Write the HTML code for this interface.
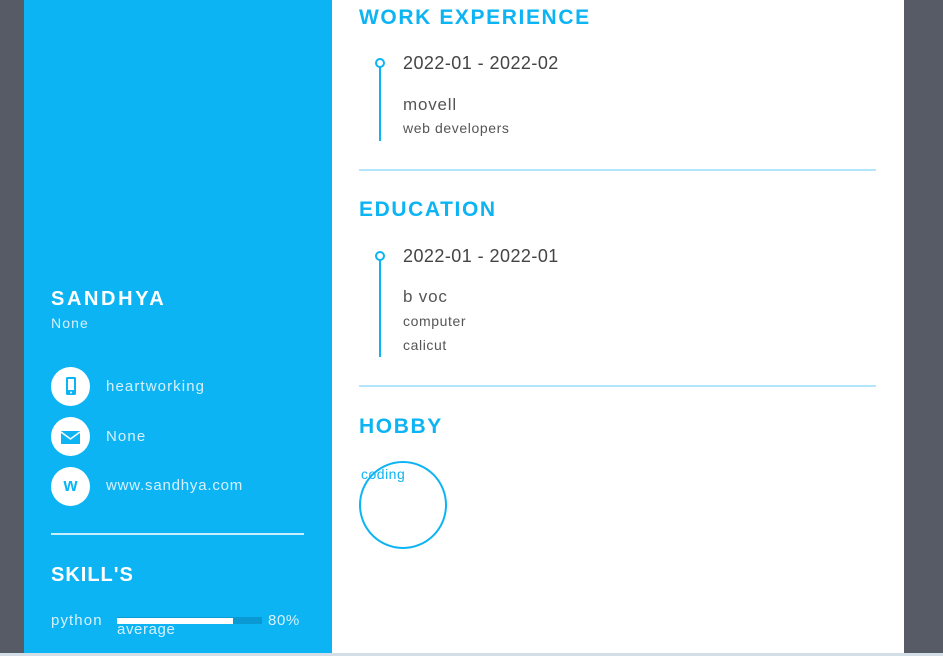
<!DOCTYPE html>
<html><head><style>
*{margin:0;padding:0;box-sizing:border-box}
body{width:943px;height:656px;overflow:hidden;background:#575b66;font-family:"Liberation Sans",sans-serif;position:relative}
.side{position:absolute;left:24px;top:0;width:308px;height:653px;background:#0db4f3;color:#fff}
.main{position:absolute;left:332px;top:0;width:572px;height:653px;background:#fff}
.bot{position:absolute;left:0;top:653px;width:943px;height:3px;background:#d3dee6}
.abs{position:absolute;white-space:nowrap}
.h{color:#0db4f3;font-weight:bold;font-size:21px;letter-spacing:1.6px}
.ic{position:absolute;left:27px;width:39px;height:39px;border-radius:50%;background:#fff}
.lt{color:#d6f1fd;font-size:15px;letter-spacing:1.1px}
.tl{position:absolute;width:2px;background:#0db4f3}
.dot{position:absolute;width:10px;height:10px;border:2px solid #0db4f3;border-radius:50%;background:#fff}
.hr{position:absolute;left:27px;width:517px;height:2px;background:#b3e5fb}
.d{font-size:18px;color:#444;letter-spacing:.45px}
.s{font-size:14px;color:#555;letter-spacing:.6px}
</style></head><body>
<div class="side">
<div class="abs" style="left:27px;top:288px;font-size:20px;font-weight:bold;letter-spacing:2.6px">SANDHYA</div>
<div class="abs lt" style="left:27px;top:315px;font-size:14px">None</div>
<div class="ic" style="top:367px"><svg width="39" height="39"><rect x="15" y="10" width="10" height="18" rx="1.5" fill="#0db4f3"/><rect x="17" y="12" width="6" height="11" fill="#fff"/><circle cx="20" cy="25.5" r="1" fill="#fff"/></svg></div>
<div class="abs lt" style="left:82px;top:378px">heartworking</div>
<div class="ic" style="top:417px"><svg width="39" height="39"><rect x="10" y="14" width="19" height="13" fill="#0db4f3"/><path d="M10 15 L19.5 22 L29 15" stroke="#fff" stroke-width="1.5" fill="none"/></svg></div>
<div class="abs lt" style="left:82px;top:428px">None</div>
<div class="ic" style="top:467px"><div class="abs" style="left:0;width:39px;text-align:center;top:8px;color:#0db4f3;font-weight:bold;font-size:18px">w</div></div>
<div class="abs lt" style="left:82px;top:477px;letter-spacing:.8px">www.sandhya.com</div>
<div class="abs" style="left:27px;top:533px;width:253px;height:2px;background:#c8eefd"></div>
<div class="abs" style="left:27px;top:564px;font-size:20px;font-weight:bold;letter-spacing:1px">SKILL'S</div>
<div class="abs lt" style="left:27px;top:612px">python</div>
<div class="abs" style="left:93px;top:617px;width:145px;height:7px;background:#0a99d2"></div>
<div class="abs" style="left:93px;top:618px;width:116px;height:6px;background:#fff"></div>
<div class="abs lt" style="left:93px;top:621px;letter-spacing:.6px">average</div>
<div class="abs lt" style="left:244px;top:612px;letter-spacing:.6px">80%</div>
</div>
<div class="main">
<div class="abs h" style="left:27px;top:6px">WORK EXPERIENCE</div>
<div class="tl" style="left:47px;top:64px;height:77px"></div>
<div class="dot" style="left:43px;top:58px"></div>
<div class="abs d" style="left:71px;top:53px">2022-01 - 2022-02</div>
<div class="abs" style="left:71px;top:95px;font-size:17px;color:#555;letter-spacing:.8px">movell</div>
<div class="abs s" style="left:71px;top:120px">web developers</div>
<div class="hr" style="top:169px"></div>
<div class="abs h" style="left:27px;top:198px">EDUCATION</div>
<div class="tl" style="left:47px;top:257px;height:100px"></div>
<div class="dot" style="left:43px;top:251px"></div>
<div class="abs d" style="left:71px;top:246px">2022-01 - 2022-01</div>
<div class="abs" style="left:71px;top:287px;font-size:17px;color:#555;letter-spacing:.8px">b voc</div>
<div class="abs s" style="left:71px;top:313px">computer</div>
<div class="abs s" style="left:71px;top:337px">calicut</div>
<div class="hr" style="top:385px"></div>
<div class="abs h" style="left:27px;top:415px">HOBBY</div>
<div class="abs" style="left:27px;top:461px;width:88px;height:88px;border:2px solid #0db4f3;border-radius:50%"></div>
<div class="abs" style="left:29px;top:466px;font-size:14px;color:#0db4f3;letter-spacing:.5px">coding</div>
</div>
<div class="bot"></div>
</body></html>
